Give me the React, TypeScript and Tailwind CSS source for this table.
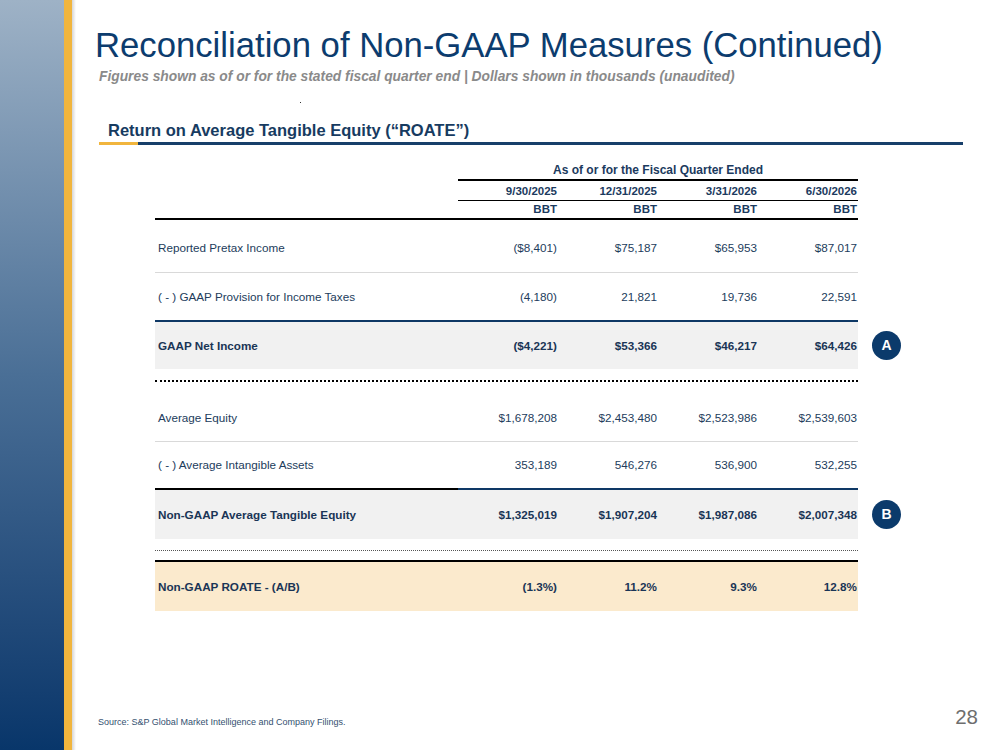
import React from 'react';

const quarters = ['9/30/2025', '12/31/2025', '3/31/2026', '6/30/2026'];

type RowProps = {
  label: string;
  values: string[];
  rowClass?: string;
  labelCell?: string;
  valueCell?: string;
};

// one line of the reconciliation table: label column + four quarter columns
const Row: React.FC<RowProps> = ({ label, values, rowClass = '', labelCell = '', valueCell = '' }) => (
  <div className={`flex w-[703px] ${rowClass}`}>
    <div className={`w-[303px] shrink-0 pl-[3px] flex items-center ${labelCell}`}>{label}</div>
    {values.map((v, i) => (
      <div key={i} className={`w-[100px] shrink-0 pr-[1px] flex items-center justify-end ${valueCell}`}>
        {v}
      </div>
    ))}
  </div>
);

const Badge: React.FC<{ letter: string }> = ({ letter }) => (
  <div className="ml-[14px] w-[29px] h-[29px] rounded-full bg-[#0b3a6b] text-white font-bold text-[14px] flex items-center justify-center">
    {letter}
  </div>
);

const App: React.FC = () => {
  return (
    <div className="flex w-[999px] h-[750px] overflow-hidden bg-white font-['Liberation_Sans',Arial,sans-serif]">
      {/* left rail */}
      <div className="w-[64px] shrink-0 bg-gradient-to-b from-[#9eb2c6] via-[#4a6f96] to-[#08366a]" />
      <div className="w-[8px] shrink-0 bg-[#f1b53d]" />
      <div className="w-[4px] shrink-0 bg-gradient-to-r from-[#d6d6d6] to-white" />

      <div className="flex-1 flex flex-col">
        <h1 className="ml-[19px] mt-[27.5px] text-[34.7px] leading-none text-[#0c3c6e] whitespace-nowrap">
          Reconciliation of Non-GAAP Measures (Continued)
        </h1>
        <p className="ml-[23px] mt-[8px] text-[13.8px] leading-none italic font-bold text-[#8a8a8a] whitespace-nowrap">
          Figures shown as of or for the stated fiscal quarter end | Dollars shown in thousands (unaudited)
        </p>
        <div className="ml-[224px] mt-[18px] w-px h-px bg-[#333]" />
        <h2 className="ml-[32px] mt-[18.5px] text-[16.5px] leading-none font-bold text-[#173b61] whitespace-nowrap">
          Return on Average Tangible Equity (“ROATE”)
        </h2>
        <div className="ml-[23px] mt-[4px] flex w-[864px] h-[3px]">
          <div className="w-[39px] bg-[#f1b53d]" />
          <div className="flex-1 bg-[#173f6a]" />
        </div>

        {/* table */}
        <div className="ml-[79px] mt-[15px] text-[11.7px] text-[#223c5c]">
          <div className="ml-[303px] w-[400px] h-[21px] border-b-2 border-black flex items-center justify-center font-bold text-[12px] text-[#1b3a5e]">
            As of or for the Fiscal Quarter Ended
          </div>
          <div className="ml-[303px] w-[400px] h-[20px] pt-[2px] border-b border-black flex font-bold text-[11.5px] text-[#1b3a5e]">
            {quarters.map((q) => (
              <div key={q} className="w-[100px] pr-[1px] flex items-center justify-end">{q}</div>
            ))}
          </div>
          <div className="w-[703px] h-[19px] border-b-2 border-black flex font-bold text-[11.5px] text-[#1b3a5e]">
            <div className="w-[303px]" />
            {quarters.map((q) => (
              <div key={q} className="w-[100px] pr-[1px] flex items-center justify-end">BBT</div>
            ))}
          </div>

          <Row
            label="Reported Pretax Income"
            values={['($8,401)', '$75,187', '$65,953', '$87,017']}
            rowClass="h-[53px] pt-[4px] border-b border-[#d9d9d9]"
          />
          <Row
            label="( - ) GAAP Provision for Income Taxes"
            values={['(4,180)', '21,821', '19,736', '22,591']}
            rowClass="h-[49px] border-b-2 border-[#0e3865]"
          />
          <div className="flex items-center">
            <Row
              label="GAAP Net Income"
              values={['($4,221)', '$53,366', '$46,217', '$64,426']}
              rowClass="h-[47px] bg-[#f1f1f1] font-bold text-[#1a3556]"
            />
            <Badge letter="A" />
          </div>
          <div className="mt-[11px] w-[703px] border-t-2 border-dotted border-black" />

          <Row
            label="Average Equity"
            values={['$1,678,208', '$2,453,480', '$2,523,986', '$2,539,603']}
            rowClass="mt-[12px] h-[48px] border-b border-[#d9d9d9]"
          />
          <Row
            label="( - ) Average Intangible Assets"
            values={['353,189', '546,276', '536,900', '532,255']}
            rowClass="h-[48px]"
            labelCell="border-b-2 border-black"
            valueCell="border-b-2 border-[#0e3865]"
          />
          <div className="flex items-center">
            <Row
              label="Non-GAAP Average Tangible Equity"
              values={['$1,325,019', '$1,907,204', '$1,987,086', '$2,007,348']}
              rowClass="h-[49px] bg-[#f1f1f1] font-bold text-[#1a3556]"
            />
            <Badge letter="B" />
          </div>
          <div className="mt-[11px] w-[703px] border-t border-dotted border-[#555]" />

          <Row
            label="Non-GAAP ROATE - (A/B)"
            values={['(1.3%)', '11.2%', '9.3%', '12.8%']}
            rowClass="mt-[9px] h-[51px] border-t-2 border-black bg-[#fbeacd] font-bold text-[#1a3556]"
          />
        </div>

        {/* footer */}
        <div className="mt-auto mb-[23px] flex items-end justify-between">
          <span className="ml-[22px] mb-[0px] text-[9px] leading-none text-[#34506f] whitespace-nowrap">
            Source: S&amp;P Global Market Intelligence and Company Filings.
          </span>
          <span className="mr-[21px] text-[20.5px] leading-none text-[#6e6e6e]">28</span>
        </div>
      </div>
    </div>
  );
};

export default App;
